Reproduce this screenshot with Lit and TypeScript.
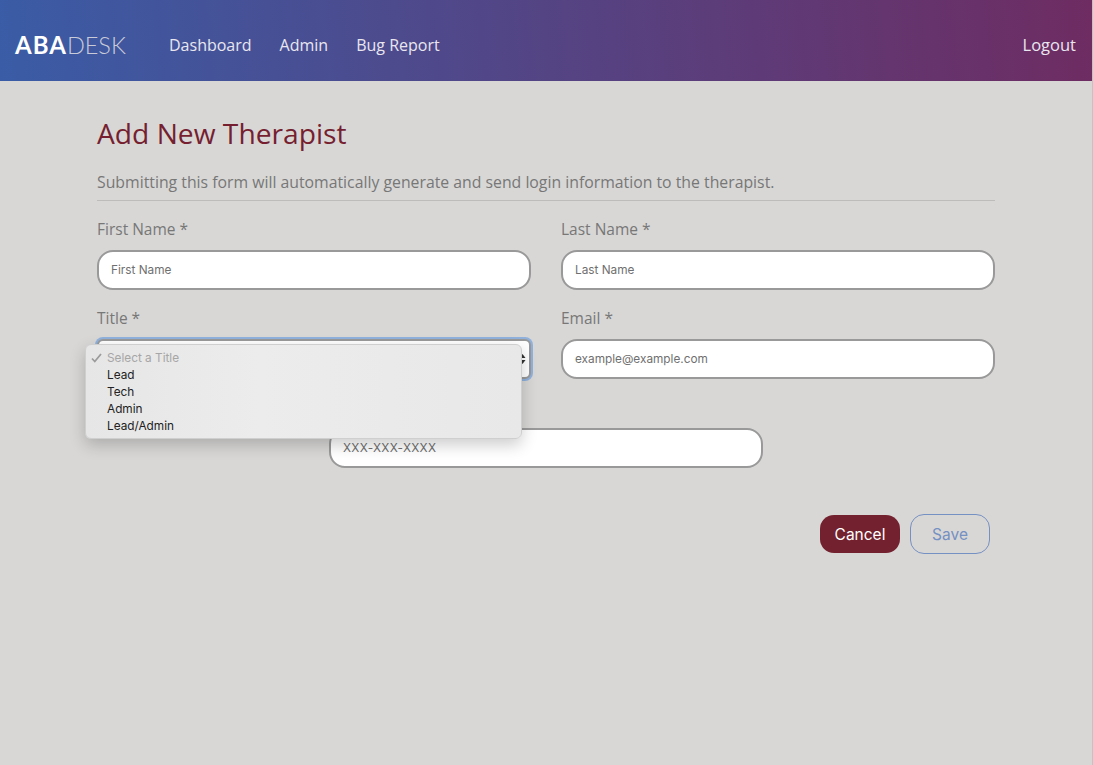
import { LitElement, html, css } from "lit";
import { customElement } from "lit/decorators.js";

@customElement("app-root")
export class AppRoot extends LitElement {
  static styles = css`
    :host { display: block; box-sizing: border-box; min-height: 765px; background: #d8d7d6; border-right: 1px solid #c4c3c3; font-family: "Open Sans", "Liberation Sans", sans-serif; overflow: hidden; }
    * { box-sizing: border-box; }
    header { height: 81px; display: flex; align-items: center; padding: 8px 16px 0 15px; background: linear-gradient(84deg, #3a5ca6 0%, #6e2c62 100%); }
    .logo { font-family: "Lato", sans-serif; font-size: 23.5px; line-height: 24px; color: #c9cbd8; font-weight: 300; width: 154px; flex: none; }
    .logo b { color: #fff; font-size: 24px; font-weight: 700; letter-spacing: 1px; }
    nav { display: flex; gap: 28px; flex: 1; }
    a { color: #e9e6ef; font-size: 16px; }
    a.logout { font-size: 16.5px; }
    main { padding: 33px 97px 0 97px; }
    h1 { margin: 0; font-size: 28.2px; line-height: 38px; font-weight: 400; color: #751f30; }
    .lead { margin: 19px 0 0; font-size: 15.8px; line-height: 22px; color: #777; padding-bottom: 7px; border-bottom: 1px solid #bdbcbb; }
    .grid { display: grid; grid-template-columns: 434px 434px; column-gap: 30px; margin-top: 17px; row-gap: 17px; }
    .center { grid-column: 1 / -1; justify-self: start; width: 434px; margin-left: 232px; }
    label { display: block; font-size: 15.5px; line-height: 22px; color: #777; margin-bottom: 10px; }
    .input { height: 40px; border: 2px solid #999; border-radius: 16px; background: #fff; display: flex; align-items: center; padding: 0 12px 1px; font-family: "Inter", sans-serif; font-size: 11.8px; color: #6f6f6f; }
    .phone { font-size: 11.8px; letter-spacing: .3px; }
    .sel { position: relative; }
    .select { position: relative; border-radius: 6px; box-shadow: 0 0 0 2px #8fb1dc; justify-content: flex-end; padding-right: 3px; }
    .arrows { color: #333; }
    .menu { position: absolute; left: -12px; top: 5px; width: 437px; height: 95px; background: linear-gradient(90deg, #e6e6e6, #ececec 40%, #e8e8e8); border: 1px solid #cfcfcf; border-radius: 6px; box-shadow: 0 6px 16px rgba(0,0,0,.2); padding: 5px 0 0 21px; font-family: "Inter", sans-serif; font-size: 11.8px; line-height: 17px; color: #222; z-index: 2; }
    .menu div { position: relative; height: 17px; }
    .menu .off { color: #a6a6a6; }
    .check { position: absolute; left: -16px; top: 3px; }
    .actions { display: flex; justify-content: flex-end; gap: 10px; margin-top: 46px; padding-right: 5px; align-items: center; }
    button { width: 80px; font-family: "Inter", sans-serif; font-size: 15.5px; border-radius: 14px; background: transparent; }
    .cancel { height: 38px; background: #73212f; color: #fff; border: none; }
    .save { height: 40px; border: 1px solid #7590c2; color: #7590c2; }
  `;

  render() {
    return html`
      <header>
        <div class="logo"><b>ABA</b>DESK</div>
        <nav><a>Dashboard</a><a>Admin</a><a>Bug Report</a></nav>
        <a class="logout">Logout</a>
      </header>
      <main>
        <h1>Add New Therapist</h1>
        <p class="lead">Submitting this form will automatically generate and send login information to the therapist.</p>
        <div class="grid">
          <div><label>First Name *</label><div class="input">First Name</div></div>
          <div><label>Last Name *</label><div class="input">Last Name</div></div>
          <div>
            <label>Title *</label>
            <div class="sel">
              <div class="input select">
                <svg class="arrows" width="7" height="12" viewBox="0 0 7 12"><path d="M3.5 1 6.5 5H.5zM3.5 11 .5 7h6z" fill="currentColor"/></svg>
              </div>
              <div class="menu">
                <div class="off"><svg class="check" width="11" height="10" viewBox="0 0 11 10"><path d="M1 5.5 3.8 8.5 10 1" fill="none" stroke="#9b9b9b" stroke-width="1.8"/></svg>Select a Title</div>
                <div>Lead</div><div>Tech</div><div>Admin</div><div>Lead/Admin</div>
              </div>
            </div>
          </div>
          <div><label>Email *</label><div class="input">example@example.com</div></div>
          <div class="center"><label>Phone *</label><div class="input phone">XXX-XXX-XXXX</div></div>
        </div>
        <div class="actions"><button class="cancel">Cancel</button><button class="save">Save</button></div>
      </main>
    `;
  }
}
